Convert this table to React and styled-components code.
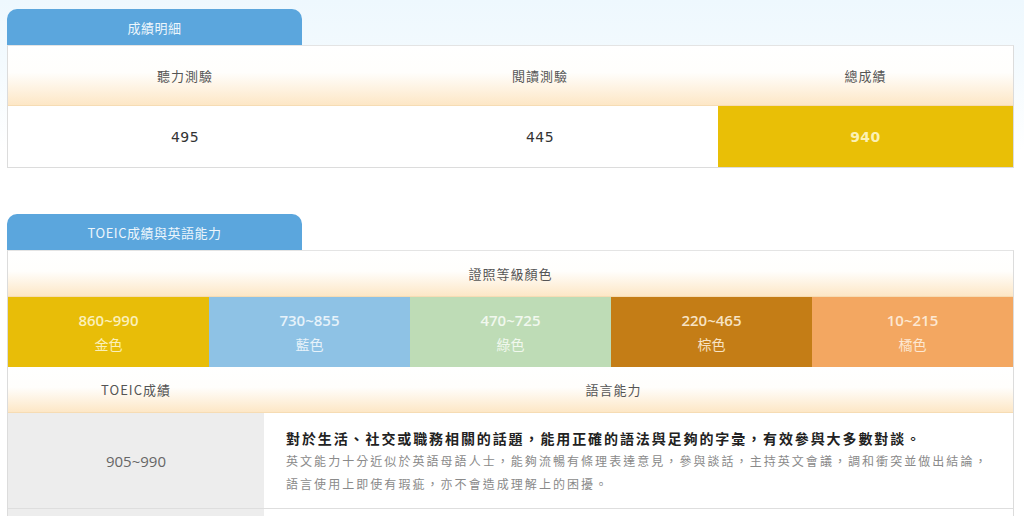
import styled, { createGlobalStyle } from 'styled-components';

const GlobalStyle = createGlobalStyle`
  html, body {
    margin: 0;
    padding: 0;
  }
  body {
    background: linear-gradient(to bottom, #eef8fe 0px, #f3fafe 60px, #ffffff 150px);
    font-family: "Noto Sans CJK TC", "Noto Sans", sans-serif;
  }
  * {
    box-sizing: border-box;
  }
`;

const levels = [
  { range: '860~990', name: '金色', bg: '#e8bd08', fg: '#fbf0b8' },
  { range: '730~855', name: '藍色', bg: '#8ec2e5', fg: '#e6f2fa' },
  { range: '470~725', name: '綠色', bg: '#bedcb6', fg: '#f1f8ee' },
  { range: '220~465', name: '棕色', bg: '#c47d16', fg: '#f7e3c4' },
  { range: '10~215', name: '橘色', bg: '#f3a761', fg: '#fde8d2' },
];

export default function App() {
  return (
    <Page>
      <GlobalStyle />

      <Section>
        <Tab>成績明細</Tab>
        <Table>
          <ScoreGrid>
            <HeadCell>聽力測驗</HeadCell>
            <HeadCell>閱讀測驗</HeadCell>
            <HeadCell>總成績</HeadCell>
            <ScoreCell>495</ScoreCell>
            <ScoreCell>445</ScoreCell>
            <ScoreCell $total>940</ScoreCell>
          </ScoreGrid>
        </Table>
      </Section>

      <Section $gap>
        <Tab>TOEIC成績與英語能力</Tab>
        <Table>
          <HeadCell $h={46}>證照等級顏色</HeadCell>
          <LevelRow>
            {levels.map(l => (
              <LevelCell key={l.range} $bg={l.bg} $fg={l.fg}>
                <LevelRange>{l.range}</LevelRange>
                <LevelName>{l.name}</LevelName>
              </LevelCell>
            ))}
          </LevelRow>
          <AbilityGrid>
            <HeadCell $h={46}>TOEIC成績</HeadCell>
            <HeadCell $h={46} $pr={50}>語言能力</HeadCell>
            <RangeCell>905~990</RangeCell>
            <DescCell>
              <DescTitle>對於生活、社交或職務相關的話題，能用正確的語法與足夠的字彙，有效參與大多數對談。</DescTitle>
              <DescText>英文能力十分近似於英語母語人士，能夠流暢有條理表達意見，參與談話，主持英文會議，調和衝突並做出結論，</DescText>
              <DescText>語言使用上即使有瑕疵，亦不會造成理解上的困擾。</DescText>
            </DescCell>
            <RangeCell />
            <DescCell />
          </AbilityGrid>
        </Table>
      </Section>
    </Page>
  );
}

const Page = styled.div`
  padding: 9px 10px 0 7px;
  width: 1024px;
`;

const Section = styled.section`
  margin-top: ${p => (p.$gap ? '46px' : '0')};
`;

const Tab = styled.div`
  width: 295px;
  height: 36px;
  background: #5ba6dd;
  border-radius: 10px 10px 0 0;
  color: #edf6fc;
  font-size: 13px;
  display: flex;
  align-items: center;
  justify-content: center;
  letter-spacing: 0.5px;
`;

const Table = styled.div`
  border: 1px solid #dcdcdc;
  border-top-color: #e4e4e4;
  background: #fff;
`;

const ScoreGrid = styled.div`
  display: grid;
  grid-template-columns: 354px 356px 1fr;
`;

const HeadCell = styled.div`
  height: ${p => p.$h || 60}px;
  display: flex;
  align-items: center;
  justify-content: center;
  padding-right: ${p => p.$pr || 0}px;
  background: linear-gradient(to bottom, #ffffff 0%, #fffefc 45%, #fde7c6 100%);
  border-bottom: 1px solid #f6dcb4;
  color: #555;
  font-size: 13px;
  letter-spacing: 1px;
`;

const ScoreCell = styled.div`
  height: 61px;
  display: flex;
  align-items: center;
  justify-content: center;
  font-family: "DejaVu Sans", Verdana, sans-serif;
  font-size: 14px;
  letter-spacing: 0.5px;
  color: ${p => (p.$total ? '#fbf1b4' : '#333')};
  font-weight: ${p => (p.$total ? 'bold' : 'normal')};
  background: ${p => (p.$total ? '#e9bf06' : '#fff')};
`;

const LevelRow = styled.div`
  display: grid;
  grid-template-columns: repeat(5, 1fr);
`;

const LevelCell = styled.div`
  height: 70px;
  background: ${p => p.$bg};
  color: ${p => p.$fg};
  display: flex;
  flex-direction: column;
  align-items: center;
  justify-content: center;
`;

const LevelRange = styled.div`
  font-family: "Open Sans", "Noto Sans", sans-serif;
  font-size: 15px;
  font-weight: 600;
  line-height: 24px;
`;

const LevelName = styled.div`
  font-size: 14px;
  line-height: 24px;
`;

const AbilityGrid = styled.div`
  display: grid;
  grid-template-columns: 256px 1fr;
`;

const RangeCell = styled.div`
  height: 96px;
  background: #ededed;
  border-bottom: 1px solid #dedede;
  display: flex;
  align-items: center;
  justify-content: center;
  font-family: "Open Sans", "Noto Sans", sans-serif;
  font-size: 15px;
  color: #666;
`;

const DescCell = styled.div`
  height: 96px;
  border-bottom: 1px solid #dedede;
  padding: 14px 0 0 22px;
`;

const DescTitle = styled.div`
  font-size: 14px;
  font-weight: bold;
  color: #222;
  letter-spacing: 1.9px;
  line-height: 22px;
  white-space: nowrap;
`;

const DescText = styled.div`
  font-size: 12px;
  color: #8a8a8a;
  letter-spacing: 2.05px;
  line-height: 23px;
  white-space: nowrap;
  &:first-of-type {
    margin-top: 3px;
  }
`;
